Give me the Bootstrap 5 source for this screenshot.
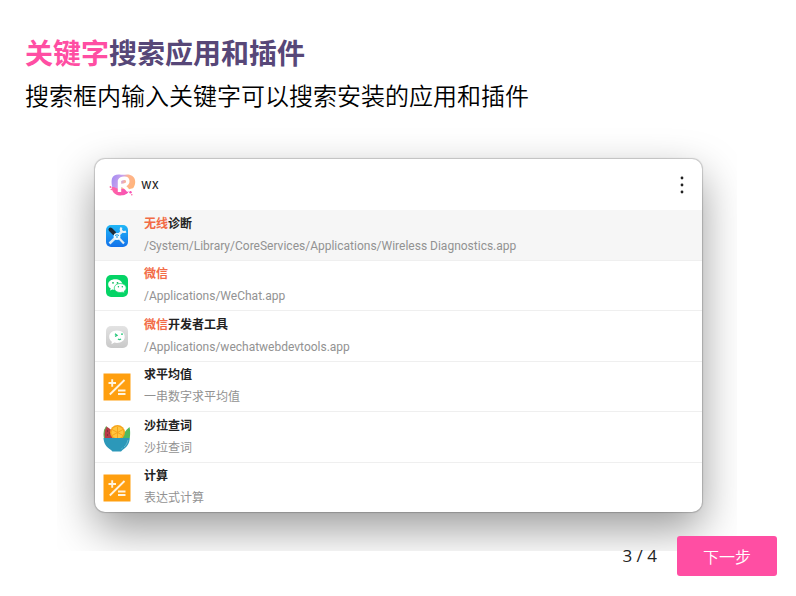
<!DOCTYPE html>
<html lang="zh-CN">
<head>
<meta charset="utf-8">
<meta name="viewport" content="width=device-width, initial-scale=1">
<title>关键字搜索应用和插件</title>
<link href="https://cdn.jsdelivr.net/npm/bootstrap@5.3.0/dist/css/bootstrap.min.css" rel="stylesheet">
<style>
  body { font-family: "Open Sans", "Noto Sans CJK SC", sans-serif; background: #fff; color: #000; }
  .guide { padding: 32px 19px 20px 25px; }
  .guide-title { font-size: 28px; line-height: 40px; color: #574778; font-family: "Noto Sans CJK SC", sans-serif; }
  .guide-title span { color: #ff4ea3; }
  .guide-text { font-size: 24px; line-height: 46px; font-weight: 350; font-family: "Noto Sans CJK SC", sans-serif; }
  .stage { margin: 0 40px 0 32px; padding: 41px 35px 39px 38px; overflow: hidden; }
  .panel { min-height: 353px; border-radius: 10px; background: #fff; box-shadow: 0 0 1px 1px rgba(0,0,0,.18), 0 17px 44px rgba(0,0,0,.4); font-family: Roboto, "Noto Sans CJK SC", sans-serif; }
  .search-bar { height: 51px; padding: 0 14px; }
  .search-bar input { font-family: Inter, "Noto Sans CJK SC", sans-serif; font-size: 13px; color: #222; outline: 0; }
  .menu-btn { width: 12px; height: 24px; }
  .result { padding: 2px 8px 0; gap: 13px; color: inherit; border-bottom: 1px solid #efefef; }
  .result:first-child { background: #f6f6f6; }
  .result:last-child { border-bottom: 0; border-radius: 0 0 10px 10px; }
  .result-icon { width: 28px; }
  .result-name { font-size: 12px; line-height: 20px; font-weight: 700; color: #222; }
  .result-name em { font-style: normal; color: #f26b45; }
  .result-desc { font-size: 12px; line-height: 24px; color: #929292; }
  .guide-foot { margin-top: -15px; gap: 20px; font-size: 17px; color: #222; }
  .next-btn { width: 100px; height: 40px; border-radius: 3px; background: #ff4ea3; color: #fff; font-size: 16px; font-weight: 350; font-family: "Noto Sans CJK SC", sans-serif; }
</style>
</head>
<body>
<svg class="d-none" xmlns="http://www.w3.org/2000/svg">
  <symbol id="calc" viewBox="0 0 28 28">
    <path fill="#ff9f0f" d="M.5 .5H27.500v27H.5z"/>
    <path fill="none" stroke="#fff4df" stroke-width="1.900" d="M5.500 10h7.500M9.200 6.200v7.500M6.800 21.500 21.500 7M15 17.500h7.500M15 21h7.500"/>
  </symbol>
</svg>
<main class="guide">
  <h1 class="guide-title fw-bold m-0"><span>关键字</span>搜索应用和插件</h1>
  <p class="guide-text m-0">搜索框内输入关键字可以搜索安装的应用和插件</p>
  <div class="stage">
    <section class="panel d-flex flex-column">
      <div class="search-bar d-flex align-items-center">
        <svg width="28" height="24" viewBox="0 0 28 24" aria-hidden="true">
          <defs>
            <linearGradient id="lg" x1="0" x2="1" y1=".2" y2=".5"><stop offset="0" stop-color="#a58df2"/><stop offset=".4" stop-color="#c9a2ec"/><stop offset=".6" stop-color="#ffb391"/><stop offset="1" stop-color="#ffb57a"/></linearGradient>
            <linearGradient id="lp" x1="0" x2="1"><stop offset="0" stop-color="#ff65a6"/><stop offset="1" stop-color="#f750b4"/></linearGradient>
          </defs>
          <path fill="url(#lg)" d="M3 5.500C4 2 8 1 12 1.800c4 .4 7-1.300 11 1 3.500 2 4 7 2.200 10.500C24 17 20 15 18 18c-5 3-14 1-15-5-.5-3-.6-5 0-7.500z"/>
          <path fill="url(#lp)" d="M2.500 14.500c3-1.500 4.500 1.500 7.500 1.500s6-.5 8.500 1c2.500 1.500-.5 4.500-4.500 5.300-5 .7-9.500-.8-11-5.800z"/>
          <path fill="none" stroke="#fff" stroke-width="3.400" stroke-linejoin="round" d="M10.500 19V7.500C12 5 18.500 4 18.800 8c.2 3.500-3.300 4.500-6.300 4.500 3 0 4.500 2.500 7 5.500"/>
          <circle cx="21.500" cy="19.300" r="1.200" fill="#f750b4"/><circle cx="22.800" cy="21.800" r=".8" fill="#ff65a6"/><circle cx="1.500" cy="14" r=".9" fill="#ff65a6"/><circle cx="2.300" cy="16.500" r=".8" fill="#ff65a6"/>
        </svg>
        <input class="flex-fill border-0 bg-transparent ms-1 p-0" type="text" value="wx" aria-label="搜索">
        <button class="menu-btn btn p-0 border-0 d-flex align-items-center justify-content-center" type="button" aria-label="菜单">
          <svg width="4" height="18" viewBox="0 0 4 18" fill="#222"><circle cx="2" cy="2" r="1.400"/><circle cx="2" cy="9" r="1.400"/><circle cx="2" cy="16" r="1.400"/></svg>
        </button>
      </div>
      <div class="d-flex flex-column flex-fill">
        <a href="#" class="result flex-fill d-flex align-items-center text-decoration-none">
          <svg class="result-icon" height="28" viewBox="0 0 28 28" aria-hidden="true">
            <defs><linearGradient id="bl" x2="0" y2="1"><stop stop-color="#20b7f7"/><stop offset="1" stop-color="#1371ea"/></linearGradient></defs>
            <rect x="3" y="3" width="22" height="22" rx="5" fill="url(#bl)"/>
            <path stroke="#dcebf5" stroke-width="2.500" d="m6.500 21.500 12.500-12"/>
            <path fill="none" stroke="#e9f0f4" stroke-width="2.200" d="M18.500 5.500c-2 3 1 5.500 4.500 4"/>
            <path stroke="#e3ebef" stroke-width="2.200" d="m12 12 9 9.500"/>
            <path stroke="#1c2a38" stroke-width="4" stroke-linecap="round" d="m7.500 7.500 3.500 3.500"/>
            <circle cx="14" cy="14.500" r="3.400" fill="#eefaff"/><path fill="none" stroke="#1594db" d="M12 13.500q2-1.500 4 0M13 15.200q1-.8 2 0"/>
          </svg>
          <span class="d-flex flex-column"><span class="result-name"><em>无线</em>诊断</span><span class="result-desc">/System/Library/CoreServices/Applications/Wireless Diagnostics.app</span></span>
        </a>
        <a href="#" class="result flex-fill d-flex align-items-center text-decoration-none">
          <svg class="result-icon" height="28" viewBox="0 0 28 28" aria-hidden="true">
            <rect x="3" y="3" width="22" height="22" rx="5" fill="#05d466"/>
            <path fill="#fff" d="M12.200 7.300c-4 0-7 2.200-7 5.100 0 1.800 1 3.200 2.500 4.100L7 18.600l2.500-1.200c1.300.3 3 .4 4.500 0 4-.8 5.500-3 5.300-5.200-.3-3-3.300-4.900-7.100-4.900z"/>
            <path fill="#fff" stroke="#05d466" stroke-width=".7" d="M17.300 11.500c-3.400 0-6 1.900-6 4.500s2.600 4.500 6 4.500c.8 0 1.500-.1 2.200-.3l2 1-.5-1.700c1.300-.8 2.200-2 2.200-3.500 0-2.600-2.500-4.500-5.900-4.500z"/>
            <g fill="#05b95a"><circle cx="10" cy="10.800" r=".9"/><circle cx="14.500" cy="10.800" r=".9"/><circle cx="15.400" cy="14.700" r=".7"/><circle cx="19.300" cy="14.700" r=".7"/></g>
          </svg>
          <span class="d-flex flex-column"><span class="result-name"><em>微信</em></span><span class="result-desc">/Applications/WeChat.app</span></span>
        </a>
        <a href="#" class="result flex-fill d-flex align-items-center text-decoration-none">
          <svg class="result-icon" height="28" viewBox="0 0 28 28" aria-hidden="true">
            <defs><linearGradient id="gr" x2="0" y2="1"><stop stop-color="#e3e3e3"/><stop offset="1" stop-color="#c9c9c9"/></linearGradient></defs>
            <rect x="3" y="3" width="22" height="22" rx="5" fill="url(#gr)"/>
            <path fill="#fff" d="M14 7.500c-4.700 0-7.800 2.800-7.800 6.200 0 2.100 1 3.800 2.700 5l-.5 2.500 3-1.600c4.900 1.100 10.300-1 10.300-5.900 0-3.400-3-6.200-7.700-6.200z"/>
            <path fill="none" stroke="#27c77b" stroke-width="1.300" d="m12 10.800 2 1.500-2 1M18 11.200h2M15 16q1.500 1.200 3 0"/>
          </svg>
          <span class="d-flex flex-column"><span class="result-name"><em>微信</em>开发者工具</span><span class="result-desc">/Applications/wechatwebdevtools.app</span></span>
        </a>
        <a href="#" class="result flex-fill d-flex align-items-center text-decoration-none">
          <svg class="result-icon" height="28" aria-hidden="true"><use href="#calc"/></svg>
          <span class="d-flex flex-column"><span class="result-name">求平均值</span><span class="result-desc">一串数字求平均值</span></span>
        </a>
        <a href="#" class="result flex-fill d-flex align-items-center text-decoration-none">
          <svg class="result-icon" height="28" viewBox="0 0 28 28" aria-hidden="true">
            <path fill="#50b960" d="M19 14c1-4 3-7 7.500-11 .8 3 .8 7 .3 11z"/>
            <path fill="#b83b47" d="M1.500 14C.3 9 1.300 5 3.500 2.500 8 5 12 9 14 14z"/><path fill="none" stroke="#66a954" stroke-width="1.200" d="M1.500 14C.5 9 1.500 5 3.500 2.500"/>
            <g fill="#672834"><circle cx="4.500" cy="7" r=".7"/><circle cx="4.500" cy="11" r=".7"/><circle cx="7" cy="9" r=".7"/></g>
            <circle cx="14.500" cy="8.500" r="7.500" fill="#f6a51c"/><circle cx="14.500" cy="8.500" r="6" fill="#ffc53f"/>
            <path stroke="#f5a01a" stroke-width=".9" d="M14.500 3v11M9 5.500l11 6M20 5.500l-11 6"/>
            <path fill="#2c98b9" d="M.5 14h26.300c-.2 5-2.500 9-7.300 12l-1.500 1.500H9.500L8 26C3 23 .7 19 .5 14z"/>
            <path fill="none" stroke="#76c3d4" stroke-width=".8" d="M25 16c-.7 3-2 5.500-4 7M19.500 24l-1 .7"/>
          </svg>
          <span class="d-flex flex-column"><span class="result-name">沙拉查词</span><span class="result-desc">沙拉查词</span></span>
        </a>
        <a href="#" class="result flex-fill d-flex align-items-center text-decoration-none">
          <svg class="result-icon" height="28" aria-hidden="true"><use href="#calc"/></svg>
          <span class="d-flex flex-column"><span class="result-name">计算</span><span class="result-desc">表达式计算</span></span>
        </a>
      </div>
    </section>
  </div>
  <footer class="guide-foot position-relative d-flex align-items-center justify-content-end">
    <span>3 / 4</span>
    <button type="button" class="next-btn btn border-0 p-0">下一步</button>
  </footer>
</main>
<script src="https://cdn.jsdelivr.net/npm/bootstrap@5.3.0/dist/js/bootstrap.bundle.min.js"></script>
</body>
</html>
